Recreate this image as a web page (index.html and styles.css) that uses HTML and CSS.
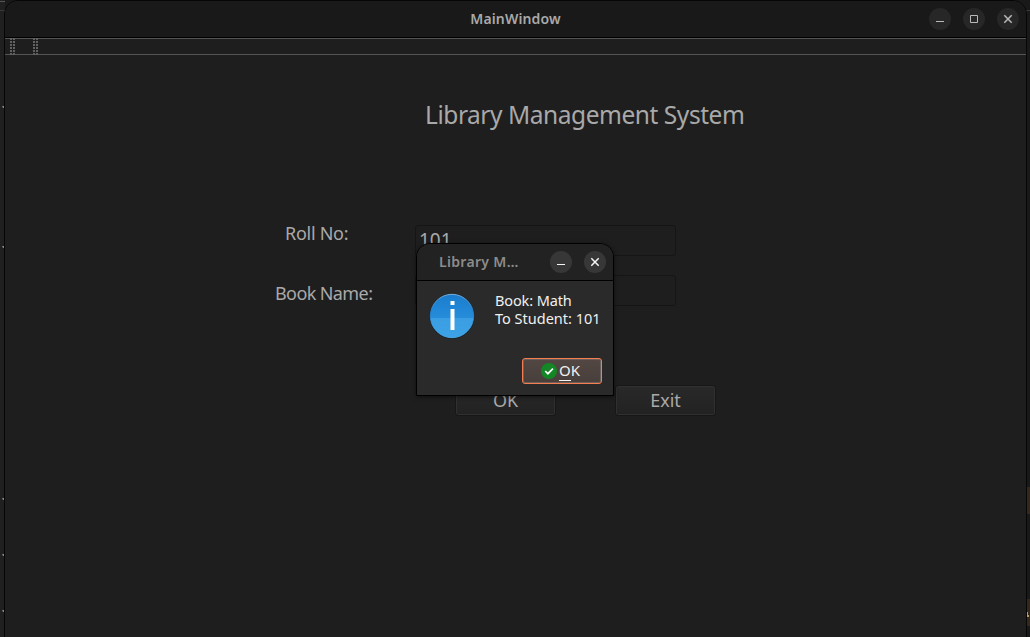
FILE: index.html
```html
<!DOCTYPE html>
<html lang="en">
<head>
<meta charset="utf-8">
<title>MainWindow</title>
<link rel="stylesheet" href="styles.css">
</head>
<body>
<div class="desktop">
  <svg class="backdrop" width="1030" height="637" aria-hidden="true">
    <path d="M0 10.5H12M1018 10.5H1030" stroke="#393939"/>
    <path d="M0 1.5H5" stroke="#555"/>
    <path d="M23 .5H160M276 .5H300M325 .5H424" stroke="#3c4043" stroke-dasharray="5 2 3 4 7 2"/>
    <g fill="#858585">
      <path d="M2 106h2v2h-1zM2 246h2v2h-1zM2 498h2v2h-1zM2 554h2v2h-1zM2 610h2v2h-1z"/>
    </g>
    <path d="M1027 487h3v27h-3zM1027 599h3v27h-3z" fill="#35291e"/>
    <path d="M1027 612h1v3h1v2h-2z" fill="#c19a55"/>
  </svg>

  <main class="window">
    <header class="titlebar">
      <h1 class="window-title">MainWindow</h1>
      <div class="controls">
        <svg class="control" viewBox="0 0 22 22"><path d="M7 13.5h8"/></svg>
        <svg class="control" viewBox="0 0 22 22"><path d="M7.5 7.5h7v7h-7z"/></svg>
        <svg class="control" viewBox="0 0 22 22"><path d="M7.3 7.3l7.4 7.4M14.7 7.3l-7.4 7.4" stroke-width="1.5"/></svg>
      </div>
    </header>
    <div class="toolbar">
      <span class="grip"></span>
      <span class="grip"></span>
    </div>
    <section class="content">
      <h2 class="heading">Library Management System</h2>
      <div class="row row-roll">
        <div class="label">Roll No:</div>
        <div class="field">101</div>
      </div>
      <div class="row row-book">
        <div class="label">Book Name:</div>
        <div class="field"></div>
      </div>
      <div class="buttons">
        <div class="button">OK</div>
        <div class="button">Exit</div>
      </div>
    </section>
  </main>

  <div class="dialog">
    <header class="dialog-bar">
      <span class="dialog-title">Library M…</span>
      <svg class="control" viewBox="0 0 22 22"><path d="M7 13.5h8"/></svg>
      <svg class="control" viewBox="0 0 22 22"><path d="M7.3 7.3l7.4 7.4M14.7 7.3l-7.4 7.4" stroke-width="1.5"/></svg>
    </header>
    <div class="dialog-body">
      <div class="message">
        <svg class="info" viewBox="0 0 46 46">
          <defs>
            <linearGradient id="top" x2="0" y2="1"><stop stop-color="#1b7ccd"/><stop offset="1" stop-color="#2e9be6"/></linearGradient>
            <linearGradient id="rim" x2="0" y2="1"><stop stop-color="#8cc5f2"/><stop offset=".4" stop-color="#2283d3"/><stop offset="1" stop-color="#58b3ec"/></linearGradient>
          </defs>
          <circle cx="23" cy="23.4" r="22.5" fill="#16202a"/>
          <circle cx="23" cy="23" r="21.7" fill="url(#top)" stroke="url(#rim)" stroke-width=".8"/>
          <path d="M1.6 25h42.8A21.5 21.5 0 0 1 1.6 25z" fill="#45a5e5" fill-opacity=".7"/>
          <path d="M21.5 8h4v4h-4zM21.5 16h4v21h-4z" fill="#fff"/>
        </svg>
        <p class="message-text"><span class="book-line">Book: Math</span><span>To Student: 101</span></p>
      </div>
      <div class="dialog-button">
        <svg class="check" viewBox="0 0 16 16"><circle cx="8" cy="8" r="8" fill="#138625"/><path d="M4.2 8l2.7 2.7 5-5" fill="none" stroke="#fff" stroke-width="1.7"/></svg>
        <span class="confirm"><span class="mnemonic">O</span>K</span>
      </div>
    </div>
  </div>
</div>
</body>
</html>
```
FILE: styles.css
```css
* { box-sizing: border-box; }
body { margin: 0; background: #1a1a1a; font-family: "Noto Sans", "Open Sans", sans-serif; color: #a9a9a9; }
h1, h2, p { margin: 0; font-weight: 400; }
.desktop { position: relative; width: 1030px; height: 637px; overflow: hidden; background: linear-gradient(90deg, #202020 0 5px, #191919 5px); }
.backdrop { position: absolute; left: 0; top: 0; }
.window { position: absolute; left: 4px; top: 0; width: 1023px; height: 650px; border: 1px solid #060606; border-radius: 14px 14px 0 0; background: #1e1e1e; overflow: hidden; }

.titlebar { position: relative; display: flex; align-items: center; justify-content: center; height: 37px; background: #191919; border-bottom: 1px solid #000; }
.window-title { font-size: 14px; font-weight: 600; line-height: 36px; white-space: nowrap; letter-spacing: .14px; }
.controls { position: absolute; right: 7px; top: 7px; display: flex; gap: 12px; }
.control { width: 22px; height: 22px; border-radius: 50%; background: #272727; fill: none; stroke: #bababa; flex: none; }
.toolbar { display: flex; gap: 15px; height: 17px; padding-left: 5px; border-top: 1px solid #545454; border-bottom: 1px solid #545454; }
.grip { width: 8px; height: 17px; margin-top: -1px; background: linear-gradient(90deg, #626262 0 2px, transparent 2px 3px, #626262 3px 5px, transparent 5px); -webkit-mask: repeating-linear-gradient(180deg, #000 0 2px, transparent 2px 3px); mask: repeating-linear-gradient(180deg, #000 0 2px, transparent 2px 3px); }

.content { padding-top: 40px; white-space: nowrap; }
.heading { height: 40px; padding-left: 420px; font-size: 24.5px; line-height: 39px; letter-spacing: -.45px; }
.row { display: flex; }
.row-roll { margin-top: 90px; }
.row-book { margin-top: 19px; }
.label { width: 410px; font-size: 18px; line-height: 26px; }
.row-roll .label { padding-left: 280px; margin-top: -5px; letter-spacing: -.28px; }
.row-book .label { padding-left: 270px; padding-top: 5px; letter-spacing: -.6px; }
.field { width: 261px; height: 31px; border: 1px solid #151515; border-radius: 3px; font-size: 19px; line-height: 29px; padding-left: 3px; }
.buttons { display: flex; gap: 59px; margin-top: 79px; padding-left: 450px; }
.button { width: 101px; height: 31px; border: 1px solid #171717; border-radius: 3px; background: linear-gradient(#292929, #222); box-shadow: inset 0 0 0 1px #303030; font-size: 18px; line-height: 29px; text-align: center; }

.dialog { position: absolute; left: 416px; top: 243px; width: 198px; height: 153px; border: 1px solid #000; border-radius: 14px 14px 0 0; background: #2a2a2a; box-shadow: 0 1px 4px #0008; overflow: hidden; color: #f0f0f0; }
.dialog-bar { display: flex; align-items: center; height: 37px; padding-left: 22px; background: #222; border-bottom: 1px solid #000; }
.dialog-title { width: 99px; margin-right: 12px; padding-bottom: 2px; color: #8c8c8c; font-size: 14px; font-weight: 600; letter-spacing: .32px; white-space: nowrap; }
.dialog-bar .control { background: #373737; stroke: #f5f5f5; }
.dialog-bar .control + .control { margin-left: 12px; }
.message { display: flex; height: 77px; padding: 12px 0 0 12px; }
.info { width: 46px; height: 46px; flex: none; }
.message-text { display: grid; grid-auto-rows: 18px; margin: -2px 0 0 20px; font-size: 14.5px; line-height: 18px; white-space: nowrap; }
.book-line { letter-spacing: -.12px; }
.dialog-button { display: flex; align-items: center; width: 80px; height: 26px; margin-left: 105px; padding-left: 18px; gap: 2px; border: 1px solid #f47d52; border-radius: 3px; background: linear-gradient(#524743, #483e3b); box-shadow: inset 0 0 0 1px #6c5e59; font-size: 15px; line-height: 20px; }
.check { width: 16px; height: 16px; flex: none; }
.confirm { padding-bottom: 2px; }
.mnemonic { box-shadow: 0 1px #f5f5f5; }
```
